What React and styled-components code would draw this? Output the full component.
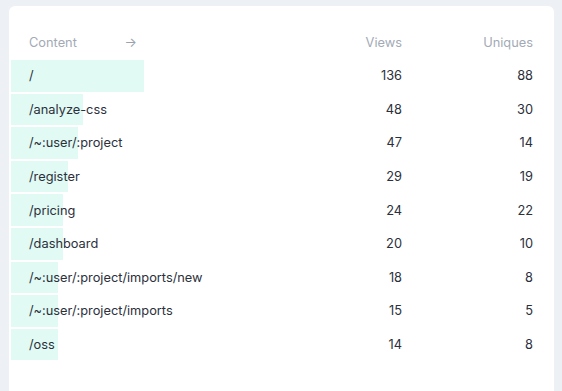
import React from 'react'
import styled, { createGlobalStyle } from 'styled-components'

const GlobalStyle = createGlobalStyle`
  html, body {
    margin: 0;
    padding: 0;
    background: #edf0f5;
    font-family: Inter, "Liberation Sans", sans-serif;
  }
`

const rows = [
  { path: '/', views: 136, uniques: 88, bar: 133 },
  { path: '/analyze-css', views: 48, uniques: 30, bar: 72 },
  { path: '/~:user/:project', views: 47, uniques: 14, bar: 67 },
  { path: '/register', views: 29, uniques: 19, bar: 57 },
  { path: '/pricing', views: 24, uniques: 22, bar: 52 },
  { path: '/dashboard', views: 20, uniques: 10, bar: 52 },
  { path: '/~:user/:project/imports/new', views: 18, uniques: 8, bar: 47 },
  { path: '/~:user/:project/imports', views: 15, uniques: 5, bar: 47 },
  { path: '/oss', views: 14, uniques: 8, bar: 47 },
]

export default function App() {
  return (
    <>
      <GlobalStyle />
      <Page>
        <Card>
          <HeaderRow>
            <HeadCell>
              Content
              <Arrow>→</Arrow>
            </HeadCell>
            <HeadCell $align="right">Views</HeadCell>
            <HeadCell $align="right">Uniques</HeadCell>
          </HeaderRow>

          {rows.map((r) => (
            <Row key={r.path}>
              <Bar style={{ width: r.bar }} />
              <Cell>{r.path}</Cell>
              <Cell $align="right">{r.views}</Cell>
              <Cell $align="right">{r.uniques}</Cell>
            </Row>
          ))}
        </Card>
      </Page>
    </>
  )
}

const Page = styled.div`
  padding: 6px 8px 0 9px;
  height: 391px;
  box-sizing: border-box;
  overflow: hidden;
`

const Card = styled.div`
  background: #fff;
  border-radius: 6px;
  padding: 24px 21px 40px 2px;
  min-height: 420px;
  box-sizing: border-box;
`

const HeaderRow = styled.div`
  display: grid;
  grid-template-columns: 133px 1fr 131px;
  height: 24px;
  align-items: center;
  padding-bottom: 6px;
`

const HeadCell = styled.div`
  display: flex;
  align-items: center;
  justify-content: ${(p) => (p.$align === 'right' ? 'flex-end' : 'space-between')};
  padding-left: ${(p) => (p.$align === 'right' ? '0' : '18px')};
  padding-right: ${(p) => (p.$align === 'right' ? '0' : '7px')};
  font-size: 12.8px;
  color: #a3aab5;
`

const Arrow = styled.span`
  font-size: 13px;
  color: #9aa2ad;
`

const Row = styled.div`
  position: relative;
  display: grid;
  grid-template-columns: 133px 1fr 131px;
  align-items: center;
  height: 31.6px;
  margin-bottom: 2px;
`

const Bar = styled.div`
  position: absolute;
  left: 0;
  top: 0;
  bottom: 0;
  background: #e1faf4;
`

const Cell = styled.div`
  position: relative;
  font-size: 12.8px;
  color: #2b303b;
  white-space: nowrap;
  text-align: ${(p) => (p.$align === 'right' ? 'right' : 'left')};
  padding-left: ${(p) => (p.$align === 'right' ? '0' : '18px')};
`
